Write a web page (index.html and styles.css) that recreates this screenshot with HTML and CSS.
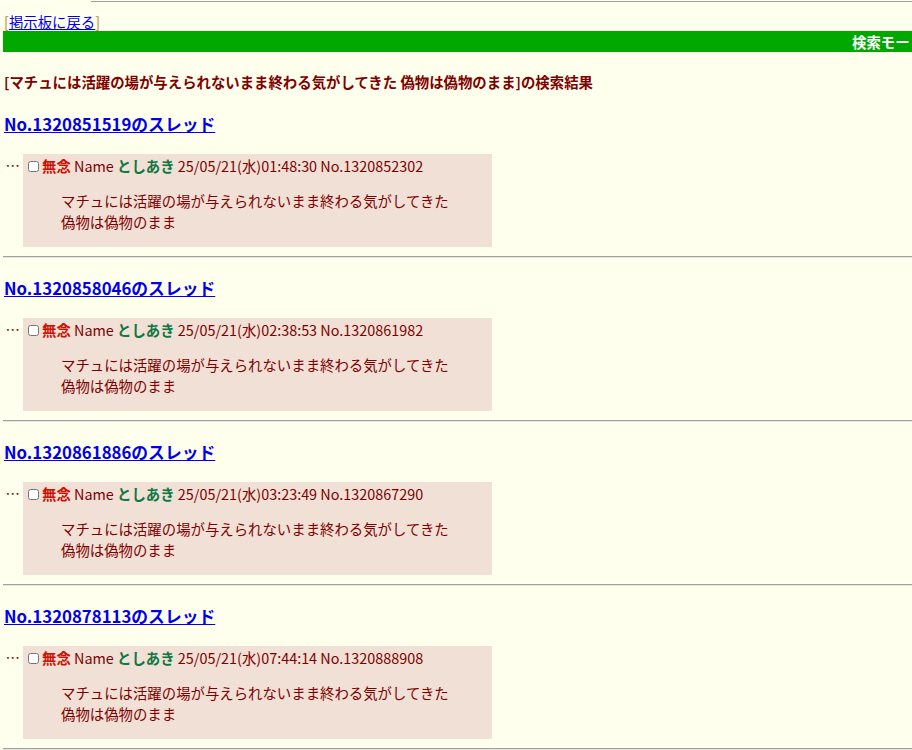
FILE: index.html
```html
<!DOCTYPE html>
<html lang="ja">
<head>
    <meta charset="UTF-8">
    <title>検索結果</title>
    <link rel="stylesheet" href="styles.css">
</head>
<body>
    <div class="topline"></div>
    <div class="back">[<a href="#">掲示板に戻る</a>]</div>
    <div class="modebar"><span>検索モード</span></div>

    <div class="search-title">[マチュには活躍の場が与えられないまま終わる気がしてきた 偽物は偽物のまま]の検索結果</div>

    <div class="thread">
        <a class="thread-link" href="#">No.1320851519のスレッド</a>
        <div class="reply">
            <div class="rts">…</div>
            <div class="rtd">
                <div class="rhead"><input type="checkbox"><span class="csb">無念</span> Name <span class="cnm">としあき</span> 25/05/21(水)01:48:30 No.1320852302</div>
                <blockquote>マチュには活躍の場が与えられないまま終わる気がしてきた<br>偽物は偽物のまま</blockquote>
            </div>
        </div>
    </div>
    <hr>

    <div class="thread">
        <a class="thread-link" href="#">No.1320858046のスレッド</a>
        <div class="reply">
            <div class="rts">…</div>
            <div class="rtd">
                <div class="rhead"><input type="checkbox"><span class="csb">無念</span> Name <span class="cnm">としあき</span> 25/05/21(水)02:38:53 No.1320861982</div>
                <blockquote>マチュには活躍の場が与えられないまま終わる気がしてきた<br>偽物は偽物のまま</blockquote>
            </div>
        </div>
    </div>
    <hr>

    <div class="thread">
        <a class="thread-link" href="#">No.1320861886のスレッド</a>
        <div class="reply">
            <div class="rts">…</div>
            <div class="rtd">
                <div class="rhead"><input type="checkbox"><span class="csb">無念</span> Name <span class="cnm">としあき</span> 25/05/21(水)03:23:49 No.1320867290</div>
                <blockquote>マチュには活躍の場が与えられないまま終わる気がしてきた<br>偽物は偽物のまま</blockquote>
            </div>
        </div>
    </div>
    <hr>

    <div class="thread">
        <a class="thread-link" href="#">No.1320878113のスレッド</a>
        <div class="reply">
            <div class="rts">…</div>
            <div class="rtd">
                <div class="rhead"><input type="checkbox"><span class="csb">無念</span> Name <span class="cnm">としあき</span> 25/05/21(水)07:44:14 No.1320888908</div>
                <blockquote>マチュには活躍の場が与えられないまま終わる気がしてきた<br>偽物は偽物のまま</blockquote>
            </div>
        </div>
    </div>
    <hr>
</body>
</html>
```

FILE: styles.css
```css
body {
    font-family: "Noto Sans CJK JP", "Noto Sans", sans-serif;
    font-size: 14.4px;
    background-color: #ffffee;
    color: #800000;
    margin: 0 0 0 3px;
    overflow-x: hidden;
}
a {
    color: #0000ee;
}
.topline {
    margin: 1px 0 0 88px;
    border-top: 1px solid #a0a0a0;
    height: 0;
}
.back {
    margin-top: 10px;
    padding-left: 1px;
    line-height: 19px;
    color: #c08040;
}
.modebar {
    height: 21px;
    background-color: #00a800;
    display: flex;
    justify-content: flex-end;
    align-items: center;
    overflow: hidden;
}
.modebar span {
    color: white;
    font-weight: bold;
    white-space: nowrap;
    margin-right: -12px;
}
.search-title {
    margin: 20px 0;
    padding-left: 1px;
    line-height: 20px;
    font-weight: bold;
}
.thread-link {
    display: inline-block;
    padding-left: 1px;
    font-size: 16.8px;
    font-weight: bold;
    line-height: 24px;
}
.reply {
    display: flex;
    align-items: flex-start;
    margin-top: 18px;
}
.rts {
    width: 17px;
    line-height: 20px;
    padding-top: 2px;
    margin-right: 3px;
    text-align: right;
}
.rtd {
    flex: none;
    background-color: #f0e0d6;
    padding-top: 2px;
}
.rhead {
    line-height: 20px;
    display: flex;
    align-items: center;
    white-space: pre;
}
.rhead input {
    width: 11px;
    height: 11px;
    margin: 0 3px 0 5px;
}
.csb {
    color: #cc1105;
    font-weight: bold;
}
.cnm {
    color: #117743;
    font-weight: bold;
}
blockquote {
    margin: 14px 43px 15px 38px;
    line-height: 21px;
}
hr {
    margin: 9px 0 18px 0;
    height: 0;
    border: none;
    border-top: 1px solid #a0a0a0;
    border-bottom: 1px solid #e6e6dc;
}
```
